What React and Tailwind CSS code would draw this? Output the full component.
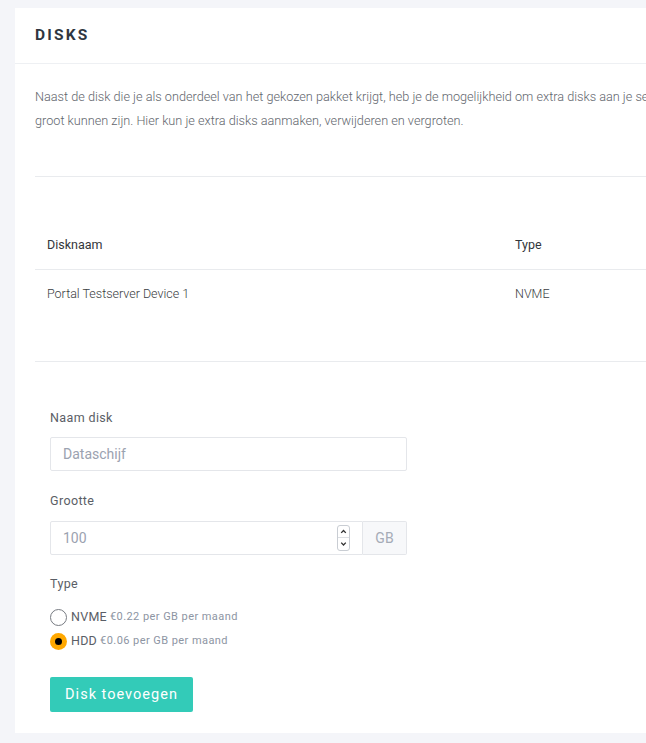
import { useState } from "react";

const DISKS = [{ name: "Portal Testserver Device 1", type: "NVME" }];

const TYPES = [
  { id: "nvme", label: "NVME", price: "€0.22 per GB per maand" },
  { id: "hdd", label: "HDD", price: "€0.06 per GB per maand" },
];

export default function App() {
  const [type, setType] = useState("hdd");

  return (
    <div
      className="min-h-screen w-full overflow-hidden bg-[#f4f5f9] pt-2 pb-3 pl-[15px]"
      style={{ fontFamily: "Roboto, 'Liberation Sans', sans-serif" }}
    >
      <div className="w-[960px] bg-white">
        {/* header */}
        <div className="flex h-[56px] items-center border-b border-[#eef0f3] px-5">
          <h2 className="text-[15.5px] font-bold tracking-[0.14em] text-[#2f3640]">DISKS</h2>
        </div>

        <div className="px-5 pt-[21px] pb-5">
          <p className="text-[12.7px] font-light leading-6 text-[#62666d]">
            Naast de disk die je als onderdeel van het gekozen pakket krijgt, heb je de mogelijkheid om extra disks aan je server toe te voegen. Deze disks kunnen maximaal 2 TB
            <br />
            groot kunnen zijn. Hier kun je extra disks aanmaken, verwijderen en vergroten.
          </p>

          <div className="mt-[43px] border-t border-[#e9ebee]" />

          {/* table */}
          <table className="mt-[44px] w-full border-collapse text-left text-[12.5px]">
            <thead>
              <tr className="border-b border-[#e9ebee]">
                <th className="w-[468px] px-3 py-3 font-normal leading-6 text-[#33363b]">Disknaam</th>
                <th className="px-3 py-3 font-normal leading-6 text-[#33363b]">Type</th>
              </tr>
            </thead>
            <tbody>
              {DISKS.map((d) => (
                <tr key={d.name}>
                  <td className="px-3 py-3 font-light leading-6 text-[#3a3d42]">{d.name}</td>
                  <td className="px-3 py-3 font-light leading-6 text-[#3a3d42]">{d.type}</td>
                </tr>
              ))}
            </tbody>
          </table>

          <div className="mt-[43px] border-t border-[#e9ebee]" />

          {/* form */}
          <div className="w-[372px] px-[15px] pt-[46px] pb-[1px]">
            <label className="block text-[12.5px] leading-5 tracking-[0.03em] text-[#5a5e66]">Naam disk</label>
            <input
              type="text"
              placeholder="Dataschijf"
              className="mt-[9px] block h-[34px] w-[357px] rounded-[2px] border border-[#e4e6ea] px-3 text-[14px] text-[#3d4148] outline-none placeholder:text-[#9ba2b0]"
            />

            <label className="mt-[20px] block text-[12.5px] leading-5 tracking-[0.03em] text-[#5a5e66]">Grootte</label>
            <div className="mt-[10px] flex h-[34px] w-[357px]">
              <div className="flex flex-1 items-center rounded-l-[2px] border border-[#e4e6ea] pl-3 pr-[12px]">
                <span className="flex-1 text-[14px] text-[#9ba2b0]">100</span>
                <div className="flex h-[26px] w-[13px] flex-col overflow-hidden rounded-[3px] border border-[#c9cdd3]">
                  <svg viewBox="0 0 12 12" className="h-1/2 w-full border-b border-[#dcdfe3]" fill="none" stroke="#333" strokeWidth="1.5">
                    <path d="M3.5 7.5 6 5l2.5 2.5" />
                  </svg>
                  <svg viewBox="0 0 12 12" className="h-1/2 w-full" fill="none" stroke="#333" strokeWidth="1.5">
                    <path d="M3.5 4.5 6 7l2.5-2.5" />
                  </svg>
                </div>
              </div>
              <div className="flex w-[44px] items-center justify-center rounded-r-[2px] border border-l-0 border-[#e4e6ea] bg-[#f7f8fa] text-[14px] text-[#a5abb6]">
                GB
              </div>
            </div>

            <label className="mt-[19px] block text-[12.5px] leading-5 tracking-[0.03em] text-[#5a5e66]">Type</label>
            <div className="mt-[11px]">
              {TYPES.map((t) => {
                const checked = type === t.id;
                return (
                  <button
                    key={t.id}
                    type="button"
                    onClick={() => setType(t.id)}
                    className="flex h-6 items-center"
                  >
                    {checked ? (
                      <span className="flex h-[17px] w-[17px] items-center justify-center rounded-full bg-[#ffa800]">
                        <span className="h-[7px] w-[7px] rounded-full bg-black" />
                      </span>
                    ) : (
                      <span className="h-[17px] w-[17px] rounded-full border border-[#777b82] bg-white" />
                    )}
                    <span className="ml-[4px] text-[12.5px] tracking-[0.02em] text-[#5a5e66]">{t.label}</span>
                    <span className="ml-[3px] text-[11px] tracking-[0.04em] text-[#8d95a3]">{t.price}</span>
                  </button>
                );
              })}
            </div>

            <button
              type="button"
              className="mt-6 h-[35px] w-[143px] rounded-[2px] bg-[#33cbb8] text-[14.5px] tracking-[0.07em] text-white"
            >
              Disk toevoegen
            </button>
          </div>
        </div>
      </div>
    </div>
  );
}
